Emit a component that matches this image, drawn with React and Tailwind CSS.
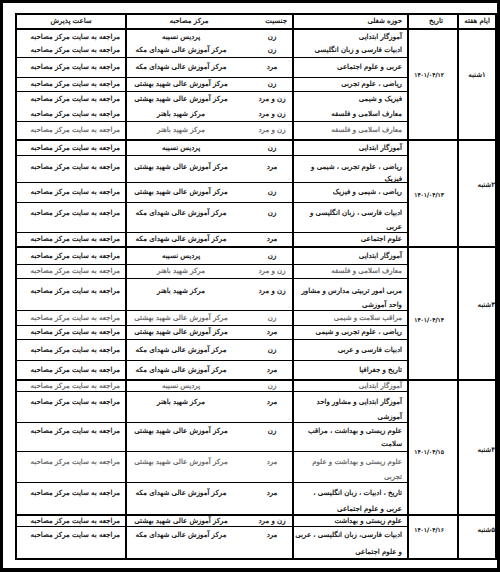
const TIME = 'مراجعه به سایت مرکز مصاحبه'
const MAKKAH = 'مرکز آموزش عالی شهدای مکه'
const BEHESHTI = 'مرکز آموزش عالی شهید بهشتی'
const BAHONAR = 'مرکز شهید باهنر'
const NASIBEH = 'پردیس نسیبه'

const groups = [
  {
    day: '۱شنبه', date: '۱۴۰۱/۰۴/۱۲', h: 'h-[111px] border-b-2',
    dayCls: 'items-center justify-center pb-[19px]', dateCls: 'items-center pb-[19px]',
    rows: [
      { f: ['آموزگار ابتدایی'], g: 'زن', c: NASIBEH, h: 'h-[14px]', nb: true },
      { f: ['ادبیات فارسی و زبان انگلیسی'], g: 'زن', c: MAKKAH, h: 'h-[14px]' },
      { f: ['عربی و علوم اجتماعی'], g: 'مرد', c: MAKKAH, h: 'h-[20px]' },
      { f: ['ریاضی ، علوم تجربی'], g: 'زن', c: BEHESHTI, h: 'h-[14px]' },
      { f: ['فیزیک و شیمی'], g: 'زن و مرد', c: BEHESHTI, h: 'h-[15px]', nb: true },
      { f: ['معارف اسلامی و فلسفه'], g: 'زن و مرد', c: BAHONAR, h: 'h-[15px]' },
      { f: ['معارف اسلامی و فلسفه'], g: 'زن و مرد', c: BAHONAR, h: 'h-[17px]', faded: true, nb: true },
    ],
  },
  {
    day: '۲شنبه', date: '۱۴۰۱/۰۴/۱۳', h: 'h-[107px] border-b-2',
    dayCls: 'items-center pl-[1px] pb-[17px]', dateCls: 'items-center pt-[3px]',
    rows: [
      { f: ['آموزگار ابتدایی'], g: 'زن', c: NASIBEH, h: 'h-[15px]' },
      { f: ['ریاضی ، علوم تجربی ، شیمی و', 'فیزیک'], g: 'مرد', c: BEHESHTI, h: 'h-[27px]', top: 'pt-[5px] leading-[12px]' },
      { f: ['ریاضی ، شیمی و فیزیک'], g: 'زن', c: BEHESHTI, h: 'h-[20px]' },
      { f: ['ادبیات فارسی ، زبان انگلیسی و', 'عربی'], g: 'زن', c: MAKKAH, h: 'h-[30px]', top: 'pt-[3px] leading-[14px]' },
      { f: ['علوم اجتماعی'], g: 'مرد', c: MAKKAH, h: 'h-[13px]', nb: true },
    ],
  },
  {
    day: '۳شنبه', date: '۱۴۰۱/۰۴/۱۴', h: 'h-[133px] border-b-2',
    dayCls: 'items-center pl-[1px] pb-[17px]', dateCls: 'items-center pt-[13px]',
    rows: [
      { f: ['آموزگار ابتدایی'], g: 'زن', c: NASIBEH, h: 'h-[17px]' },
      { f: ['معارف اسلامی و فلسفه'], g: 'زن و مرد', c: BAHONAR, h: 'h-[14px]', faded: true },
      { f: ['مربی امور تربیتی  مدارس و مشاور', 'واحد آموزشی'], g: 'زن و مرد', c: BAHONAR, h: 'h-[32px]', top: 'pt-[5px] leading-[14px]' },
      { f: ['مراقب سلامت و شیمی'], g: 'زن', c: BEHESHTI, h: 'h-[15px]', faded: true },
      { f: ['ریاضی ، علوم تجربی و شیمی'], g: 'مرد', c: BEHESHTI, h: 'h-[14px]' },
      { f: ['ادبیات فارسی  و عربی'], g: 'زن', c: MAKKAH, h: 'h-[21px]' },
      { f: ['تاریخ  و جغرافیا'], g: 'مرد', c: MAKKAH, h: 'h-[18px]', nb: true },
    ],
  },
  {
    day: '۴شنبه', date: '۱۴۰۱/۰۴/۱۵', h: 'h-[135px] border-b-2',
    dayCls: 'items-center pl-[2px] pt-[5px]', dateCls: 'items-center pt-[9px]',
    rows: [
      { f: ['آموزگار ابتدایی'], g: 'زن', c: NASIBEH, h: 'h-[11px]', faded: true },
      { f: ['آموزگار ابتدایی و مشاور واحد', 'آموزشی'], g: 'مرد', c: BAHONAR, h: 'h-[31px]', top: 'pt-[3px] leading-[15px]' },
      { f: ['علوم زیستی و بهداشت ، مراقب', 'سلامت'], g: 'زن', c: BEHESHTI, h: 'h-[29px]', top: 'pt-[2px] leading-[13px]' },
      { f: ['علوم زیستی و بهداشت  و علوم', 'تجربی'], g: 'مرد', c: BEHESHTI, h: 'h-[31px]', top: 'pt-[3px] leading-[15px]', faded: true },
      { f: ['تاریخ ، ادبیات ، زبان انگلیسی ،', 'عربی و علوم اجتماعی'], g: 'مرد', c: MAKKAH, h: 'h-[31px]', top: 'pt-[2px] leading-[16px]', nb: true },
    ],
  },
  {
    day: '۵شنبه', date: '۱۴۰۱/۰۴/۱۶', h: 'h-[42px]',
    dayCls: 'items-center pl-[6px] pb-[14px]', dateCls: 'items-center pb-[14px]',
    rows: [
      { f: ['علوم زیستی و بهداشت'], g: 'زن و مرد', c: BEHESHTI, h: 'h-[11px]' },
      { f: ['ادبیات فارسی، زبان انگلیسی ، عربی', 'و علوم اجتماعی'], g: 'مرد', c: MAKKAH, h: 'h-[31px]', top: 'pt-0 leading-[17px]', nb: true },
    ],
  },
]

function Row({ r }) {
  const cell = r.top ? `block ${r.top}` : 'flex items-center'
  return (
    <div className={`flex ${r.h} ${r.nb ? '' : 'border-b border-black'} ${r.faded ? 'text-[#5c5c5c]' : 'text-black'}`}>
      <div className={`w-[115px] border-l-2 border-black pr-[5px] whitespace-nowrap ${cell}`}>
        {r.f.map((line, i) => <div key={i}>{line}</div>)}
      </div>
      <div className={`w-[47px] pl-[7px] justify-center text-center whitespace-nowrap ${cell}`}>{r.g}</div>
      <div className={`w-[120px] border-l-2 border-black pr-[10px] justify-center text-center whitespace-nowrap ${cell}`}>{r.c}</div>
      <div className={`flex-1 pr-[5px] whitespace-nowrap ${cell}`}>{TIME}</div>
    </div>
  )
}

export default function App() {
  return (
    <div className="w-[500px] h-[572px] bg-black pt-[3px] pl-[3px] pr-[3px] pb-[4px]">
      <div className="w-full h-full bg-white pt-[10px] pl-[12px]">
        <div dir="rtl"
          className="w-[482px] h-[547px] border-2 border-black flex flex-col text-[7px] leading-none [-webkit-text-stroke-width:0.2px]"
          style={{ fontFamily: '"DejaVu Sans", sans-serif' }}>
          <div className="flex h-[15px] border-b-2 border-black text-black">
            <div className="w-[38px] border-l-2 border-black flex items-center justify-center whitespace-nowrap">ایام هفته</div>
            <div className="w-[50px] border-l-2 border-black flex items-center pr-[14px]">تاریخ</div>
            <div className="w-[115px] border-l-2 border-black flex items-center pr-[5px]">حوزه شغلی</div>
            <div className="w-[47px] flex items-center pr-[5px]">جنسیت</div>
            <div className="w-[120px] border-l-2 border-black flex items-center justify-center pl-[6px]">مرکز مصاحبه</div>
            <div className="flex-1 flex items-center justify-center">ساعت پذیرش</div>
          </div>
          {groups.map((g, gi) => (
            <div key={gi} className={`flex ${g.h} border-black`}>
              <div className={`w-[38px] border-l-2 border-black flex text-black ${g.dayCls}`}>{g.day}</div>
              <div className={`w-[50px] border-l-2 border-black flex pr-[13px] text-black text-[6px] tracking-[-0.6px] ${g.dateCls}`}>{g.date}</div>
              <div className="w-[390px] flex flex-col">
                {g.rows.map((r, ri) => <Row key={ri} r={r} />)}
              </div>
            </div>
          ))}
        </div>
      </div>
    </div>
  )
}
